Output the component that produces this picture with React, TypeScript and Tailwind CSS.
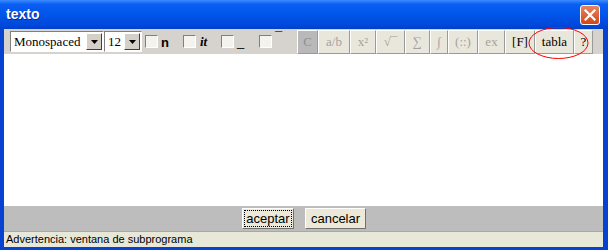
import React from 'react'

function Combo({ label, w }: { label: string; w: string }) {
  return (
    <div className={`flex h-[21px] ${w} items-stretch border border-t-[#808080] border-l-[#808080] border-b-white border-r-white bg-white`}>
      <div className="flex min-w-0 flex-1 items-center overflow-hidden pl-[3px] font-['Liberation_Serif',serif] text-[13px] leading-none text-black">{label}</div>
      <div className="m-[1px] flex w-[16px] shrink-0 items-center justify-center border border-t-white border-l-white border-b-[#404040] border-r-[#404040] bg-[#d4d0c8]">
        <svg width="7" height="4" viewBox="0 0 7 4"><path d="M0 0h7L3.5 4z" fill="#000" /></svg>
      </div>
    </div>
  )
}

function Check({ label, cls }: { label: string; cls: string }) {
  return (
    <div className="flex w-[38px] items-center">
      <div className="h-[13px] w-[13px] border border-t-[#808080] border-l-[#808080] border-b-white border-r-white bg-[#f4f3ee]" />
      <span className={cls}>{label}</span>
    </div>
  )
}

function TB({ label, w, dark, on }: { label: string; w: string; dark?: boolean; on?: boolean }) {
  return (
    <div
      className={`flex h-[24px] ${w} items-center justify-center border border-t-white border-l-white border-b-[#9a9a9a] border-r-[#9a9a9a] font-['Liberation_Serif',serif] text-[13px] ${
        dark ? 'bg-[#b9b9b9]' : 'bg-[#e9e7dc]'
      } ${on ? 'text-black' : dark ? 'text-[#8f8f8f]' : 'text-[#a3a3a3]'}`}
    >
      {label}
    </div>
  )
}

export default function App() {
  return (
    <div className="relative flex h-[250px] w-[608px] flex-col overflow-hidden bg-[#0842d0]">
      {/* Title bar */}
      <div className="flex h-[29px] shrink-0 items-center justify-between bg-[linear-gradient(to_bottom,#3b8cff_0%,#0a5ef2_15%,#0055ea_50%,#0049dc_85%,#0040c8_100%)] pl-[6px] pr-[8px]">
        <span className="font-['Liberation_Sans',sans-serif] text-[14px] font-bold text-white [text-shadow:1px_1px_0_#0a2a8a]">texto</span>
        <div className="flex h-[20px] w-[20px] items-center justify-center rounded-[3px] border border-white bg-[linear-gradient(to_bottom,#e88460,#d0461c)]">
          <svg width="12" height="12" viewBox="0 0 12 12"><path d="M1.5 1.5l9 9M10.5 1.5l-9 9" stroke="#fff" strokeWidth="2.2" strokeLinecap="square" /></svg>
        </div>
      </div>

      {/* Body */}
      <div className="ml-[4px] mr-[5px] mb-[3px] flex flex-1 flex-col bg-[#d4d0c8]">
        {/* Toolbar */}
        <div className="flex h-[25px] shrink-0 items-center bg-[#d6d3ce] pl-[6px]">
          <Combo label="Monospaced" w="w-[94px]" />
          <Combo label="12" w="w-[38px]" />
          <div className="ml-[3px] flex items-center">
            <Check label="n" cls="ml-[3px] mt-[3px] font-['Liberation_Sans',sans-serif] text-[13px] font-bold text-black" />
            <Check label="it" cls="ml-[4px] font-['Liberation_Serif',serif] text-[13px] font-bold italic text-black" />
            <Check label="_" cls="ml-[3px] font-['Liberation_Sans',sans-serif] text-[13px] text-black" />
            <Check label="¯" cls="ml-[3px] -mt-[10px] font-['Liberation_Sans',sans-serif] text-[13px] text-black" />
          </div>
          <div className="flex items-center">
            <TB label="C" w="w-[21px]" dark />
            <TB label="a/b" w="w-[32px]" />
            <TB label="x²" w="w-[26px]" />
            <TB label="√¯" w="w-[29px]" />
            <TB label="∑" w="w-[25px]" />
            <TB label="∫" w="w-[18px]" />
            <TB label="(::)" w="w-[30px]" />
            <TB label="ex" w="w-[27px]" />
            <TB label="[F]" w="w-[30px]" on />
            <TB label="tabla" w="w-[39px]" on />
            <TB label="?" w="w-[19px]" on />
          </div>
        </div>

        {/* Editing area */}
        <div className="flex-1 bg-white" />

        {/* Buttons row */}
        <div className="flex h-[26px] shrink-0 items-center justify-center gap-[11px] border-b border-[#a8a8a8] bg-[#bdbdbd] pl-[1px]">
          <div className="flex h-[21px] w-[52px] items-center justify-center border border-t-white border-l-white border-b-[#707070] border-r-[#707070] bg-[#ece9d8]">
            <span className="border border-dotted border-black px-[1px] font-['Liberation_Sans',sans-serif] text-[13px] leading-[15px] text-black">aceptar</span>
          </div>
          <div className="flex h-[21px] w-[61px] items-center justify-center border border-t-white border-l-white border-b-[#707070] border-r-[#707070] bg-[#ece9d8] font-['Liberation_Sans',sans-serif] text-[13px] text-black">
            cancelar
          </div>
        </div>

        {/* Status bar */}
        <div className="flex h-[15px] shrink-0 items-center bg-[#e8e8d8] pl-[2px] font-['Liberation_Sans',sans-serif] text-[11px] text-black">
          Advertencia: ventana de subprograma
        </div>
      </div>

      {/* Red hand-drawn ellipse */}
      <svg className="pointer-events-none absolute left-[527px] top-[26px]" width="63" height="34" viewBox="0 0 63 34">
        <ellipse cx="31.5" cy="17" rx="29.5" ry="15.5" fill="none" stroke="#ff0000" strokeWidth="1" />
      </svg>
    </div>
  )
}
